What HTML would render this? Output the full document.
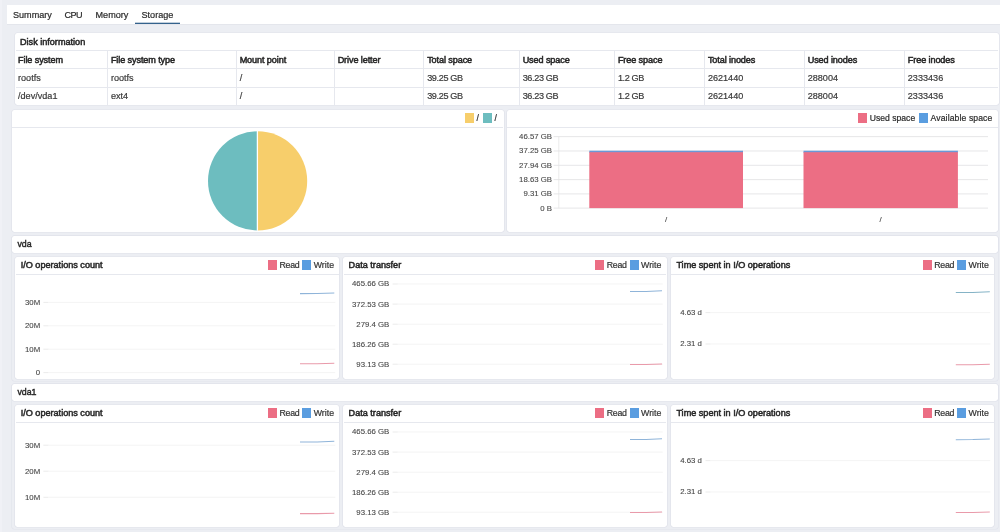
<!DOCTYPE html>
<html lang="en"><head><meta charset="utf-8"><title>Storage</title>
<style>
html,body{margin:0;padding:0;background:#eceef3}
body{will-change:transform;width:1000px;height:532px;overflow:hidden;background:#eceef3;position:relative;font-family:"Liberation Sans",Arial,sans-serif;color:#2a2a2a}
.p{position:absolute;background:#fff;box-sizing:border-box;box-shadow:0 0 0 0.6px #dfe1e9;border-radius:2.4px}
.sec{position:absolute;background:#eceef3;box-shadow:0 0 0 0.6px #e2e4ec;border-radius:2.4px}
.w{position:absolute;background:#fff}
.l{position:absolute}
.t,.b,.c,.bt,.g,.sh{position:absolute;white-space:nowrap;line-height:12px;height:12px}
.b{-webkit-text-stroke:0.5px #262626;letter-spacing:-0.1px;color:#262626}
.bt{-webkit-text-stroke:0.5px #262626;letter-spacing:0px;color:#262626}
.sh{-webkit-text-stroke:0.42px #262626;color:#262626;letter-spacing:-0.05px}
.g{letter-spacing:-0.36px}
.t,.g{-webkit-text-stroke:0.2px currentColor}
.c{-webkit-text-stroke:0.1px currentColor}
.c{color:#474747}
.sw{position:absolute;width:9px;height:9.8px}
svg{position:absolute;left:0;top:0;overflow:visible}
</style></head><body>
<div class="p" style="left:506.60px;top:109.60px;width:491.50px;height:122.00px;"></div>
<div class="sec" style="left:11.80px;top:235.80px;width:986.30px;height:145.20px;"></div>
<div class="sec" style="left:11.80px;top:383.80px;width:986.30px;height:145.20px;"></div>
<div class="p" style="left:11.80px;top:235.80px;width:986.30px;height:17.30px;"></div>
<div class="p" style="left:11.80px;top:383.80px;width:986.30px;height:17.30px;"></div>
<div class="p" style="left:15.10px;top:256.70px;width:324.40px;height:122.10px;"></div>
<div class="p" style="left:343.00px;top:256.70px;width:323.80px;height:122.10px;"></div>
<div class="p" style="left:670.80px;top:256.70px;width:323.50px;height:122.10px;"></div>
<div class="p" style="left:15.10px;top:404.70px;width:324.40px;height:122.10px;"></div>
<div class="p" style="left:343.00px;top:404.70px;width:323.80px;height:122.10px;"></div>
<div class="p" style="left:670.80px;top:404.70px;width:323.50px;height:122.10px;"></div>

<div class="l" style="left:0;top:0;width:1.5px;height:532px;background:#f0f1f6"></div>
<div class="w" style="left:6.5px;top:5px;width:993.5px;height:19px"></div>
<div class="l" style="left:6.50px;top:24.00px;width:993.50px;height:0.8px;background:#e4e6ec"></div>
<div class="t" style="top:8.95px;font-size:9.1px;left:13.00px;">Summary</div>
<div class="t" style="top:8.95px;font-size:9.1px;left:64.50px;letter-spacing:-0.55px;">CPU</div>
<div class="t" style="top:8.95px;font-size:9.1px;left:95.50px;">Memory</div>
<div class="t" style="top:8.95px;font-size:9.1px;left:141.50px;">Storage</div>
<svg width="1000" height="30" viewBox="0 0 1000 30"><rect x="135" y="22.7" width="45" height="1.3" fill="#34628c"/></svg>
<div class="p" style="left:15.00px;top:33.00px;width:983.50px;height:72.20px;"></div>
<div class="bt" style="top:35.85px;font-size:9.1px;left:20.00px;">Disk information</div>
<div class="l" style="left:15.50px;top:50.00px;width:982.50px;height:0.8px;background:#e6e8ee"></div>
<div class="l" style="left:15.50px;top:68.40px;width:982.50px;height:0.8px;background:#e6e8ee"></div>
<div class="l" style="left:15.50px;top:86.70px;width:982.50px;height:0.8px;background:#e6e8ee"></div>
<div class="l" style="left:107.10px;top:50.40px;width:0.8px;height:54.40px;background:#e6e8ee"></div>
<div class="l" style="left:235.85px;top:50.40px;width:0.8px;height:54.40px;background:#e6e8ee"></div>
<div class="l" style="left:333.85px;top:50.40px;width:0.8px;height:54.40px;background:#e6e8ee"></div>
<div class="l" style="left:423.35px;top:50.40px;width:0.8px;height:54.40px;background:#e6e8ee"></div>
<div class="l" style="left:518.85px;top:50.40px;width:0.8px;height:54.40px;background:#e6e8ee"></div>
<div class="l" style="left:614.10px;top:50.40px;width:0.8px;height:54.40px;background:#e6e8ee"></div>
<div class="l" style="left:704.10px;top:50.40px;width:0.8px;height:54.40px;background:#e6e8ee"></div>
<div class="l" style="left:803.90px;top:50.40px;width:0.8px;height:54.40px;background:#e6e8ee"></div>
<div class="l" style="left:904.00px;top:50.40px;width:0.8px;height:54.40px;background:#e6e8ee"></div>
<div class="b" style="top:53.65px;font-size:9.1px;left:18.00px;">File system</div>
<div class="t" style="top:71.65px;font-size:9.1px;left:18.00px;color:#3a3a3a;">rootfs</div>
<div class="t" style="top:90.05px;font-size:9.1px;left:18.00px;color:#3a3a3a;">/dev/vda1</div>
<div class="b" style="top:53.65px;font-size:9.1px;left:110.90px;">File system type</div>
<div class="t" style="top:71.65px;font-size:9.1px;left:110.90px;color:#3a3a3a;">rootfs</div>
<div class="t" style="top:90.05px;font-size:9.1px;left:110.90px;color:#3a3a3a;">ext4</div>
<div class="b" style="top:53.65px;font-size:9.1px;left:239.65px;">Mount point</div>
<div class="t" style="top:71.65px;font-size:9.1px;left:239.65px;color:#3a3a3a;">/</div>
<div class="t" style="top:90.05px;font-size:9.1px;left:239.65px;color:#3a3a3a;">/</div>
<div class="b" style="top:53.65px;font-size:9.1px;left:337.65px;">Drive letter</div>
<div class="b" style="top:53.65px;font-size:9.1px;left:427.15px;">Total space</div>
<div class="g" style="top:71.65px;font-size:9.1px;left:427.15px;color:#3a3a3a;">39.25 GB</div>
<div class="g" style="top:90.05px;font-size:9.1px;left:427.15px;color:#3a3a3a;">39.25 GB</div>
<div class="b" style="top:53.65px;font-size:9.1px;left:522.65px;">Used space</div>
<div class="g" style="top:71.65px;font-size:9.1px;left:522.65px;color:#3a3a3a;">36.23 GB</div>
<div class="g" style="top:90.05px;font-size:9.1px;left:522.65px;color:#3a3a3a;">36.23 GB</div>
<div class="b" style="top:53.65px;font-size:9.1px;left:617.90px;">Free space</div>
<div class="g" style="top:71.65px;font-size:9.1px;left:617.90px;color:#3a3a3a;">1.2 GB</div>
<div class="g" style="top:90.05px;font-size:9.1px;left:617.90px;color:#3a3a3a;">1.2 GB</div>
<div class="b" style="top:53.65px;font-size:9.1px;left:707.90px;">Total inodes</div>
<div class="t" style="top:71.65px;font-size:9.1px;left:707.90px;color:#3a3a3a;">2621440</div>
<div class="t" style="top:90.05px;font-size:9.1px;left:707.90px;color:#3a3a3a;">2621440</div>
<div class="b" style="top:53.65px;font-size:9.1px;left:807.70px;">Used inodes</div>
<div class="t" style="top:71.65px;font-size:9.1px;left:807.70px;color:#3a3a3a;">288004</div>
<div class="t" style="top:90.05px;font-size:9.1px;left:807.70px;color:#3a3a3a;">288004</div>
<div class="b" style="top:53.65px;font-size:9.1px;left:907.80px;">Free inodes</div>
<div class="t" style="top:71.65px;font-size:9.1px;left:907.80px;color:#3a3a3a;">2333436</div>
<div class="t" style="top:90.05px;font-size:9.1px;left:907.80px;color:#3a3a3a;">2333436</div>
<div class="p" style="left:11.80px;top:109.60px;width:491.80px;height:122.00px;"></div>
<div class="l" style="left:12.30px;top:126.90px;width:490.80px;height:0.8px;background:#e6e8ee"></div>
<div class="sw" style="left:465px;top:113.2px;background:#f7ce6b"></div>
<div class="t" style="top:112.42px;font-size:8.6px;left:476.60px;">/</div>
<div class="sw" style="left:483px;top:113.2px;background:#6dbdbf"></div>
<div class="t" style="top:112.42px;font-size:8.6px;left:494.40px;">/</div>
<svg width="1000" height="532" viewBox="0 0 1000 532">
<path d="M257.6 131.3 A49.6 49.6 0 0 1 257.6 230.5 Z" fill="#f7ce6b"/>
<path d="M257.6 230.5 A49.6 49.6 0 0 1 257.6 131.3 Z" fill="#6dbdbf"/>
<line x1="257.40000000000003" y1="131.0" x2="257.40000000000003" y2="230.8" stroke="#fff" stroke-width="1.3"/>
<line x1="553.6" y1="136.6" x2="988" y2="136.6" stroke="#e2e2e4" stroke-width="0.85"/>
<line x1="553.6" y1="151.0" x2="988" y2="151.0" stroke="#e2e2e4" stroke-width="0.85"/>
<line x1="553.6" y1="165.3" x2="988" y2="165.3" stroke="#e2e2e4" stroke-width="0.85"/>
<line x1="553.6" y1="179.6" x2="988" y2="179.6" stroke="#e2e2e4" stroke-width="0.85"/>
<line x1="553.6" y1="193.9" x2="988" y2="193.9" stroke="#e2e2e4" stroke-width="0.85"/>
<line x1="553.6" y1="208.1" x2="988" y2="208.1" stroke="#e2e2e4" stroke-width="0.85"/>
<line x1="558.8" y1="136.6" x2="558.8" y2="208.1" stroke="#e2e2e4" stroke-width="0.7"/>
<rect x="589.3" y="150.7" width="153.7" height="2.2" fill="#6a98d8"/>
<rect x="589.3" y="152.2" width="153.7" height="55.9" fill="#ec6e84"/>
<rect x="803.5" y="150.7" width="154.4" height="2.2" fill="#6a98d8"/>
<rect x="803.5" y="152.2" width="154.4" height="55.9" fill="#ec6e84"/>
</svg>
<svg width="1000" height="532" viewBox="0 0 1000 532">
<line x1="43.4" y1="302.4" x2="48.4" y2="302.4" stroke="#e2e2e2" stroke-width="0.7"/>
<line x1="48.4" y1="302.4" x2="335.3" y2="302.4" stroke="#efefef" stroke-width="0.7"/>
<line x1="43.4" y1="325.8" x2="48.4" y2="325.8" stroke="#e2e2e2" stroke-width="0.7"/>
<line x1="48.4" y1="325.8" x2="335.3" y2="325.8" stroke="#efefef" stroke-width="0.7"/>
<line x1="43.4" y1="349.2" x2="48.4" y2="349.2" stroke="#e2e2e2" stroke-width="0.7"/>
<line x1="48.4" y1="349.2" x2="335.3" y2="349.2" stroke="#efefef" stroke-width="0.7"/>
<line x1="43.4" y1="372.6" x2="48.4" y2="372.6" stroke="#e2e2e2" stroke-width="0.7"/>
<line x1="48.4" y1="372.6" x2="335.3" y2="372.6" stroke="#efefef" stroke-width="0.7"/>
<polyline points="300,293.59999999999997 317.15,293.5 334.3,292.9" fill="none" stroke="#8fb4d9" stroke-width="1.05"/>
<polyline points="300,363.7 317.15,363.7 334.3,363.3" fill="none" stroke="#e99aaa" stroke-width="1.05"/>
<line x1="392.6" y1="284.0" x2="397.6" y2="284.0" stroke="#e2e2e2" stroke-width="0.7"/>
<line x1="397.6" y1="284.0" x2="662.8" y2="284.0" stroke="#efefef" stroke-width="0.7"/>
<line x1="392.6" y1="304.1" x2="397.6" y2="304.1" stroke="#e2e2e2" stroke-width="0.7"/>
<line x1="397.6" y1="304.1" x2="662.8" y2="304.1" stroke="#efefef" stroke-width="0.7"/>
<line x1="392.6" y1="324.2" x2="397.6" y2="324.2" stroke="#e2e2e2" stroke-width="0.7"/>
<line x1="397.6" y1="324.2" x2="662.8" y2="324.2" stroke="#efefef" stroke-width="0.7"/>
<line x1="392.6" y1="344.2" x2="397.6" y2="344.2" stroke="#e2e2e2" stroke-width="0.7"/>
<line x1="397.6" y1="344.2" x2="662.8" y2="344.2" stroke="#efefef" stroke-width="0.7"/>
<line x1="392.6" y1="364.2" x2="397.6" y2="364.2" stroke="#e2e2e2" stroke-width="0.7"/>
<line x1="397.6" y1="364.2" x2="662.8" y2="364.2" stroke="#efefef" stroke-width="0.7"/>
<polyline points="630,291.5 646.0,291.40000000000003 662,290.8" fill="none" stroke="#8fb4d9" stroke-width="1.05"/>
<polyline points="630,364.4 646.0,364.4 662,364.0" fill="none" stroke="#e99aaa" stroke-width="1.05"/>
<line x1="705.5" y1="312.6" x2="710.5" y2="312.6" stroke="#e2e2e2" stroke-width="0.7"/>
<line x1="710.5" y1="312.6" x2="990.3" y2="312.6" stroke="#efefef" stroke-width="0.7"/>
<line x1="705.5" y1="344.0" x2="710.5" y2="344.0" stroke="#e2e2e2" stroke-width="0.7"/>
<line x1="710.5" y1="344.0" x2="990.3" y2="344.0" stroke="#efefef" stroke-width="0.7"/>
<polyline points="955.8,292.5 972.8,292.40000000000003 989.8,291.8" fill="none" stroke="#85b3c6" stroke-width="1.05"/>
<polyline points="955.8,364.7 972.8,364.7 989.8,364.3" fill="none" stroke="#e99aaa" stroke-width="1.05"/>
<line x1="43.4" y1="445.2" x2="48.4" y2="445.2" stroke="#e2e2e2" stroke-width="0.7"/>
<line x1="48.4" y1="445.2" x2="335.3" y2="445.2" stroke="#efefef" stroke-width="0.7"/>
<line x1="43.4" y1="471.2" x2="48.4" y2="471.2" stroke="#e2e2e2" stroke-width="0.7"/>
<line x1="48.4" y1="471.2" x2="335.3" y2="471.2" stroke="#efefef" stroke-width="0.7"/>
<line x1="43.4" y1="497.3" x2="48.4" y2="497.3" stroke="#e2e2e2" stroke-width="0.7"/>
<line x1="48.4" y1="497.3" x2="335.3" y2="497.3" stroke="#efefef" stroke-width="0.7"/>
<polyline points="300,442.0 317.15,441.90000000000003 334.3,441.3" fill="none" stroke="#8fb4d9" stroke-width="1.05"/>
<polyline points="300,513.6 317.15,513.6 334.3,513.1999999999999" fill="none" stroke="#e99aaa" stroke-width="1.05"/>
<line x1="392.6" y1="432.0" x2="397.6" y2="432.0" stroke="#e2e2e2" stroke-width="0.7"/>
<line x1="397.6" y1="432.0" x2="662.8" y2="432.0" stroke="#efefef" stroke-width="0.7"/>
<line x1="392.6" y1="452.1" x2="397.6" y2="452.1" stroke="#e2e2e2" stroke-width="0.7"/>
<line x1="397.6" y1="452.1" x2="662.8" y2="452.1" stroke="#efefef" stroke-width="0.7"/>
<line x1="392.6" y1="472.2" x2="397.6" y2="472.2" stroke="#e2e2e2" stroke-width="0.7"/>
<line x1="397.6" y1="472.2" x2="662.8" y2="472.2" stroke="#efefef" stroke-width="0.7"/>
<line x1="392.6" y1="492.2" x2="397.6" y2="492.2" stroke="#e2e2e2" stroke-width="0.7"/>
<line x1="397.6" y1="492.2" x2="662.8" y2="492.2" stroke="#efefef" stroke-width="0.7"/>
<line x1="392.6" y1="512.2" x2="397.6" y2="512.2" stroke="#e2e2e2" stroke-width="0.7"/>
<line x1="397.6" y1="512.2" x2="662.8" y2="512.2" stroke="#efefef" stroke-width="0.7"/>
<polyline points="630,439.5 646.0,439.40000000000003 662,438.8" fill="none" stroke="#8fb4d9" stroke-width="1.05"/>
<polyline points="630,512.4000000000001 646.0,512.4000000000001 662,512.0" fill="none" stroke="#e99aaa" stroke-width="1.05"/>
<line x1="705.5" y1="460.6" x2="710.5" y2="460.6" stroke="#e2e2e2" stroke-width="0.7"/>
<line x1="710.5" y1="460.6" x2="990.3" y2="460.6" stroke="#efefef" stroke-width="0.7"/>
<line x1="705.5" y1="492.0" x2="710.5" y2="492.0" stroke="#e2e2e2" stroke-width="0.7"/>
<line x1="710.5" y1="492.0" x2="990.3" y2="492.0" stroke="#efefef" stroke-width="0.7"/>
<polyline points="955.8,439.7 972.8,439.6 989.8,439.0" fill="none" stroke="#8fb4d9" stroke-width="1.05"/>
<polyline points="955.8,512.5 972.8,512.5 989.8,512.0999999999999" fill="none" stroke="#e99aaa" stroke-width="1.05"/>
</svg>
<div class="l" style="left:507.10px;top:126.80px;width:490.50px;height:0.8px;background:#e6e8ee"></div>
<div class="sw" style="left:858px;top:113px;background:#ec6e84"></div>
<div class="t" style="top:112.32px;font-size:8.6px;left:869.80px;">Used space</div>
<div class="sw" style="left:919px;top:113px;background:#5a9de0"></div>
<div class="t" style="top:112.32px;font-size:8.6px;left:930.60px;letter-spacing:0.12px;">Available space</div>
<div class="c" style="top:131.00px;font-size:7.8px;right:448.00px;">46.57 GB</div>
<div class="c" style="top:145.40px;font-size:7.8px;right:448.00px;">37.25 GB</div>
<div class="c" style="top:159.70px;font-size:7.8px;right:448.00px;">27.94 GB</div>
<div class="c" style="top:174.00px;font-size:7.8px;right:448.00px;">18.63 GB</div>
<div class="c" style="top:188.30px;font-size:7.8px;right:448.00px;">9.31 GB</div>
<div class="c" style="top:202.50px;font-size:7.8px;right:448.00px;">0 B</div>
<div class="c" style="top:214.10px;font-size:7.8px;left:664.90px;">/</div>
<div class="c" style="top:214.10px;font-size:7.8px;left:879.40px;">/</div>
<div class="sh" style="top:238.05px;font-size:8.8px;left:17.50px;">vda</div>
<div class="sh" style="top:386.15px;font-size:8.8px;left:17.50px;">vda1</div>
<div class="l" style="left:15.60px;top:273.90px;width:323.40px;height:0.8px;background:#e6e8ee"></div>
<div class="bt" style="top:259.25px;font-size:9.1px;left:20.70px;">I/O operations count</div>
<div class="sw" style="left:267.7px;top:260.3px;background:#ec6e84"></div>
<div class="t" style="top:259.35px;font-size:8.8px;left:279.50px;letter-spacing:-0.3px;color:#333;">Read</div>
<div class="sw" style="left:302.2px;top:260.3px;background:#5a9de0"></div>
<div class="t" style="top:259.35px;font-size:8.8px;left:313.70px;color:#333;">Write</div>
<div class="l" style="left:343.50px;top:273.90px;width:322.80px;height:0.8px;background:#e6e8ee"></div>
<div class="bt" style="top:259.25px;font-size:9.1px;left:348.60px;">Data transfer</div>
<div class="sw" style="left:595.0px;top:260.3px;background:#ec6e84"></div>
<div class="t" style="top:259.35px;font-size:8.8px;left:606.80px;letter-spacing:-0.3px;color:#333;">Read</div>
<div class="sw" style="left:629.5px;top:260.3px;background:#5a9de0"></div>
<div class="t" style="top:259.35px;font-size:8.8px;left:641.00px;color:#333;">Write</div>
<div class="l" style="left:671.30px;top:273.90px;width:322.50px;height:0.8px;background:#e6e8ee"></div>
<div class="bt" style="top:259.25px;font-size:9.1px;left:676.40px;">Time spent in I/O operations</div>
<div class="sw" style="left:922.5px;top:260.3px;background:#ec6e84"></div>
<div class="t" style="top:259.35px;font-size:8.8px;left:934.30px;letter-spacing:-0.3px;color:#333;">Read</div>
<div class="sw" style="left:957.0px;top:260.3px;background:#5a9de0"></div>
<div class="t" style="top:259.35px;font-size:8.8px;left:968.50px;color:#333;">Write</div>
<div class="l" style="left:15.60px;top:421.90px;width:323.40px;height:0.8px;background:#e6e8ee"></div>
<div class="bt" style="top:407.25px;font-size:9.1px;left:20.70px;">I/O operations count</div>
<div class="sw" style="left:267.7px;top:408.3px;background:#ec6e84"></div>
<div class="t" style="top:407.35px;font-size:8.8px;left:279.50px;letter-spacing:-0.3px;color:#333;">Read</div>
<div class="sw" style="left:302.2px;top:408.3px;background:#5a9de0"></div>
<div class="t" style="top:407.35px;font-size:8.8px;left:313.70px;color:#333;">Write</div>
<div class="l" style="left:343.50px;top:421.90px;width:322.80px;height:0.8px;background:#e6e8ee"></div>
<div class="bt" style="top:407.25px;font-size:9.1px;left:348.60px;">Data transfer</div>
<div class="sw" style="left:595.0px;top:408.3px;background:#ec6e84"></div>
<div class="t" style="top:407.35px;font-size:8.8px;left:606.80px;letter-spacing:-0.3px;color:#333;">Read</div>
<div class="sw" style="left:629.5px;top:408.3px;background:#5a9de0"></div>
<div class="t" style="top:407.35px;font-size:8.8px;left:641.00px;color:#333;">Write</div>
<div class="l" style="left:671.30px;top:421.90px;width:322.50px;height:0.8px;background:#e6e8ee"></div>
<div class="bt" style="top:407.25px;font-size:9.1px;left:676.40px;">Time spent in I/O operations</div>
<div class="sw" style="left:922.5px;top:408.3px;background:#ec6e84"></div>
<div class="t" style="top:407.35px;font-size:8.8px;left:934.30px;letter-spacing:-0.3px;color:#333;">Read</div>
<div class="sw" style="left:957.0px;top:408.3px;background:#5a9de0"></div>
<div class="t" style="top:407.35px;font-size:8.8px;left:968.50px;color:#333;">Write</div>
<div class="c" style="top:296.80px;font-size:7.8px;right:959.80px;">30M</div>
<div class="c" style="top:320.20px;font-size:7.8px;right:959.80px;">20M</div>
<div class="c" style="top:343.60px;font-size:7.8px;right:959.80px;">10M</div>
<div class="c" style="top:367.00px;font-size:7.8px;right:959.80px;">0</div>
<div class="c" style="top:439.60px;font-size:7.8px;right:959.80px;">30M</div>
<div class="c" style="top:465.60px;font-size:7.8px;right:959.80px;">20M</div>
<div class="c" style="top:491.70px;font-size:7.8px;right:959.80px;">10M</div>
<div class="c" style="top:278.40px;font-size:7.8px;right:610.70px;">465.66 GB</div>
<div class="c" style="top:298.50px;font-size:7.8px;right:610.70px;">372.53 GB</div>
<div class="c" style="top:318.60px;font-size:7.8px;right:610.70px;">279.4 GB</div>
<div class="c" style="top:338.60px;font-size:7.8px;right:610.70px;">186.26 GB</div>
<div class="c" style="top:358.60px;font-size:7.8px;right:610.70px;">93.13 GB</div>
<div class="c" style="top:307.00px;font-size:7.8px;right:298.20px;">4.63 d</div>
<div class="c" style="top:338.40px;font-size:7.8px;right:298.20px;">2.31 d</div>
<div class="c" style="top:426.40px;font-size:7.8px;right:610.70px;">465.66 GB</div>
<div class="c" style="top:446.50px;font-size:7.8px;right:610.70px;">372.53 GB</div>
<div class="c" style="top:466.60px;font-size:7.8px;right:610.70px;">279.4 GB</div>
<div class="c" style="top:486.60px;font-size:7.8px;right:610.70px;">186.26 GB</div>
<div class="c" style="top:506.60px;font-size:7.8px;right:610.70px;">93.13 GB</div>
<div class="c" style="top:455.00px;font-size:7.8px;right:298.20px;">4.63 d</div>
<div class="c" style="top:486.40px;font-size:7.8px;right:298.20px;">2.31 d</div>
</body></html>
